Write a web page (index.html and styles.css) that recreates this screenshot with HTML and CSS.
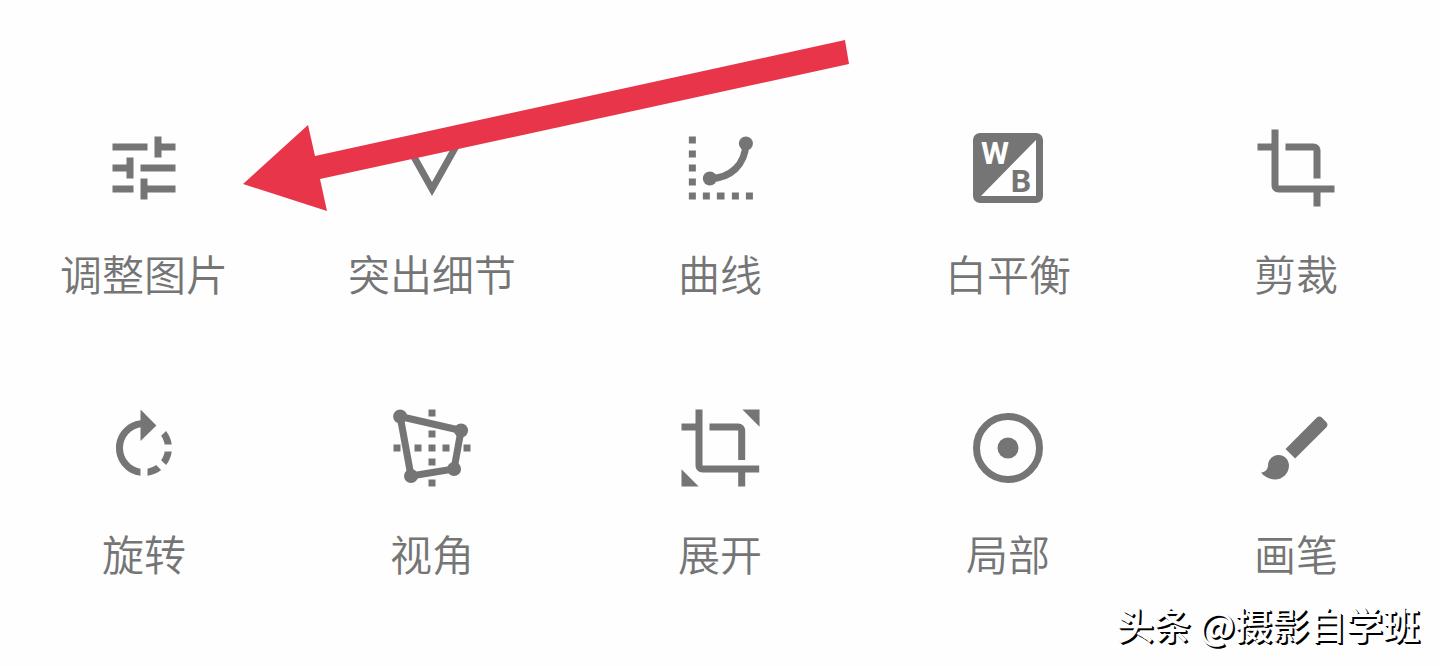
FILE: index.html
```html
<!DOCTYPE html>
<html lang="zh-CN">
<head>
<meta charset="utf-8">
<meta name="viewport" content="width=device-width, initial-scale=1">
<title>工具</title>
<link rel="stylesheet" href="styles.css">
</head>
<body>
<main class="panel">
  <div class="tools">
    <button class="tool" type="button">
      <svg class="icon" viewBox="0 0 24 24" aria-hidden="true"><path d="M3 17v2h6v-2H3zM3 5v2h10V5H3zm10 16v-2h8v-2h-8v-2h-2v6h2zM7 9v2H3v2h4v2h2V9H7zm14 4v-2H11v2h10zm-6-4h2V7h4V5h-4V3h-2v6z"/></svg>
      <span class="label">调整图片</span>
    </button>
    <button class="tool" type="button">
      <svg class="icon" viewBox="0 0 24 24" aria-hidden="true"><path d="M3 4l9 16 9-16H3zm3.38 2h11.25L12 16 6.38 6z"/></svg>
      <span class="label">突出细节</span>
    </button>
    <button class="tool" type="button">
      <svg class="icon" viewBox="0 0 24 24" aria-hidden="true"><path d="M3.1 3h2v2h-2zM3.1 7h2v2h-2zM3.1 11h2v2h-2zM3.1 15h2v2h-2zM3.1 19h2v2h-2zM7.1 19h2v2h-2zM11.1 19h2.2v2h-2.2zM15.4 19h2v2h-2zM19.4 19h2v2h-2z"/><circle cx="9.1" cy="15" r="2"/><circle cx="19.4" cy="5" r="2"/><path class="line" d="M9.1 15C15 15 19.2 11 19.4 5"/></svg>
      <span class="label">曲线</span>
    </button>
    <button class="tool" type="button">
      <svg class="icon" viewBox="0 0 84 84" aria-hidden="true"><rect x="7" y="7" width="70" height="70" rx="7"/><path class="paper" d="M15 70L70 14V70z"/><text class="mark paper" x="29" y="38">W</text><text class="mark" x="55" y="66">B</text></svg>
      <span class="label">白平衡</span>
    </button>
    <button class="tool" type="button">
      <svg class="icon" viewBox="0 0 24 24" aria-hidden="true"><path d="M17 15h2V7c0-1.100-.9-2-2-2H9v2h8v8zM7 17V1H5v4H1v2h4v10c0 1.100.9 2 2 2h10v4h2v-4h4v-2H7z"/></svg>
      <span class="label">剪裁</span>
    </button>
    <button class="tool" type="button">
      <svg class="icon" viewBox="0 0 24 24" aria-hidden="true"><path d="M15.550 5.550L11 1v3.070C7.060 4.560 4 7.920 4 12s3.050 7.440 7 7.930v-2.020c-2.840-.48-5-2.940-5-5.910s2.160-5.430 5-5.910V10l4.550-4.450zM19.930 11c-.17-1.390-.72-2.730-1.620-3.890l-1.420 1.420c.54.75.88 1.600 1.020 2.470h2.020zM13 17.900v2.020c1.390-.17 2.740-.71 3.900-1.610l-1.440-1.440c-.75.54-1.590.89-2.460 1.030zm3.890-2.420l1.420 1.410c.9-1.160 1.450-2.500 1.620-3.890h-2.020c-.14.87-.48 1.720-1.020 2.480z"/></svg>
      <span class="label">旋转</span>
    </button>
    <button class="tool" type="button">
      <svg class="icon" viewBox="0 0 24 24" aria-hidden="true"><path d="M11 1h2v2h-2zM11 7h2v2h-2zM11 11h2v2h-2zM11 15h2v2h-2zM11 21h2v2h-2zM1 11h2v2H1zM7 11h2v2H7zM15 11h2v2h-2zM21 11h2v2h-2z"/><path class="line" d="M2.900 3L20.300 7 18.300 18 6 20z"/><circle cx="2.900" cy="3" r="2"/><circle cx="20.300" cy="7" r="2"/><circle cx="18.300" cy="18" r="2"/><circle cx="6" cy="20" r="2"/></svg>
      <span class="label">视角</span>
    </button>
    <button class="tool" type="button">
      <svg class="icon" viewBox="0 0 24 24" aria-hidden="true"><path d="M17.200 15.400h2V7c0-1.100-.9-2-2-2H9v2h8.200zM7 17V1H5v4H1v2h4v10c0 1.100.9 2 2 2h10.200v4h2v-4h4v-2zM18.400 1h4.900v4.900zM1 18.100V23h4.900z"/></svg>
      <span class="label">展开</span>
    </button>
    <button class="tool" type="button">
      <svg class="icon" viewBox="0 0 24 24" aria-hidden="true"><circle class="line" cx="12" cy="12" r="9"/><circle cx="12" cy="12" r="3"/></svg>
      <span class="label">局部</span>
    </button>
    <button class="tool" type="button">
      <svg class="icon" viewBox="0 0 24 24" aria-hidden="true"><path d="M7 14c-1.660 0-3 1.340-3 3 0 1.310-1.160 2-2 2 .92 1.220 2.490 2 4 2 2.210 0 4-1.790 4-4 0-1.660-1.340-3-3-3zm13.710-9.370l-1.340-1.340c-.39-.39-1.020-.39-1.410 0L9 12.250 11.750 15l8.960-8.960c.39-.39.39-1.020 0-1.410z"/></svg>
      <span class="label">画笔</span>
    </button>
  </div>
  <svg class="arrow" viewBox="243 40 606 171" aria-hidden="true"><path d="M243 184L308 125 315 156 845 40 849 64 320 179 327 211z"/></svg>
  <p class="credit">头条 @摄影自学班</p>
</main>
</body>
</html>
```
FILE: styles.css
```css
* {
  box-sizing: border-box;
}

body {
  margin: 0;
  background: #fefefe;
  color: #757575;
  font-family: "Noto Sans CJK SC", sans-serif;
}

.panel {
  position: relative;
  min-height: 100vh;
  padding-top: 126px;
}

.tools {
  display: grid;
  grid-template-columns: repeat(5, 1fr);
  row-gap: 109px;
}

.tool {
  display: flex;
  flex-direction: column;
  align-items: center;
  gap: 39px;
  padding: 0;
  border: 0;
  background: none;
  color: inherit;
  font: inherit;
  cursor: pointer;
}

.icon {
  width: 84px;
  height: 84px;
  fill: #757575;
}

.line {
  fill: none;
  stroke: #757575;
  stroke-width: 2;
}

.icon .paper {
  fill: #fefefe;
}

.mark {
  font-family: Roboto, sans-serif;
  font-size: 32px;
  font-weight: 700;
  text-anchor: middle;
}

.label {
  font-size: 42px;
  font-weight: 350;
  line-height: 48px;
}

.arrow {
  position: absolute;
  top: 40px;
  left: 243px;
  width: 606px;
  height: 171px;
  fill: #e93549;
  pointer-events: none;
}

.credit {
  position: absolute;
  right: 20px;
  bottom: 18px;
  margin: 0;
  color: #fff;
  font-size: 37px;
  font-weight: 500;
  line-height: 48px;
  text-shadow: 1px 1px 0 #000, 2px 2px 0 #000;
}
```
